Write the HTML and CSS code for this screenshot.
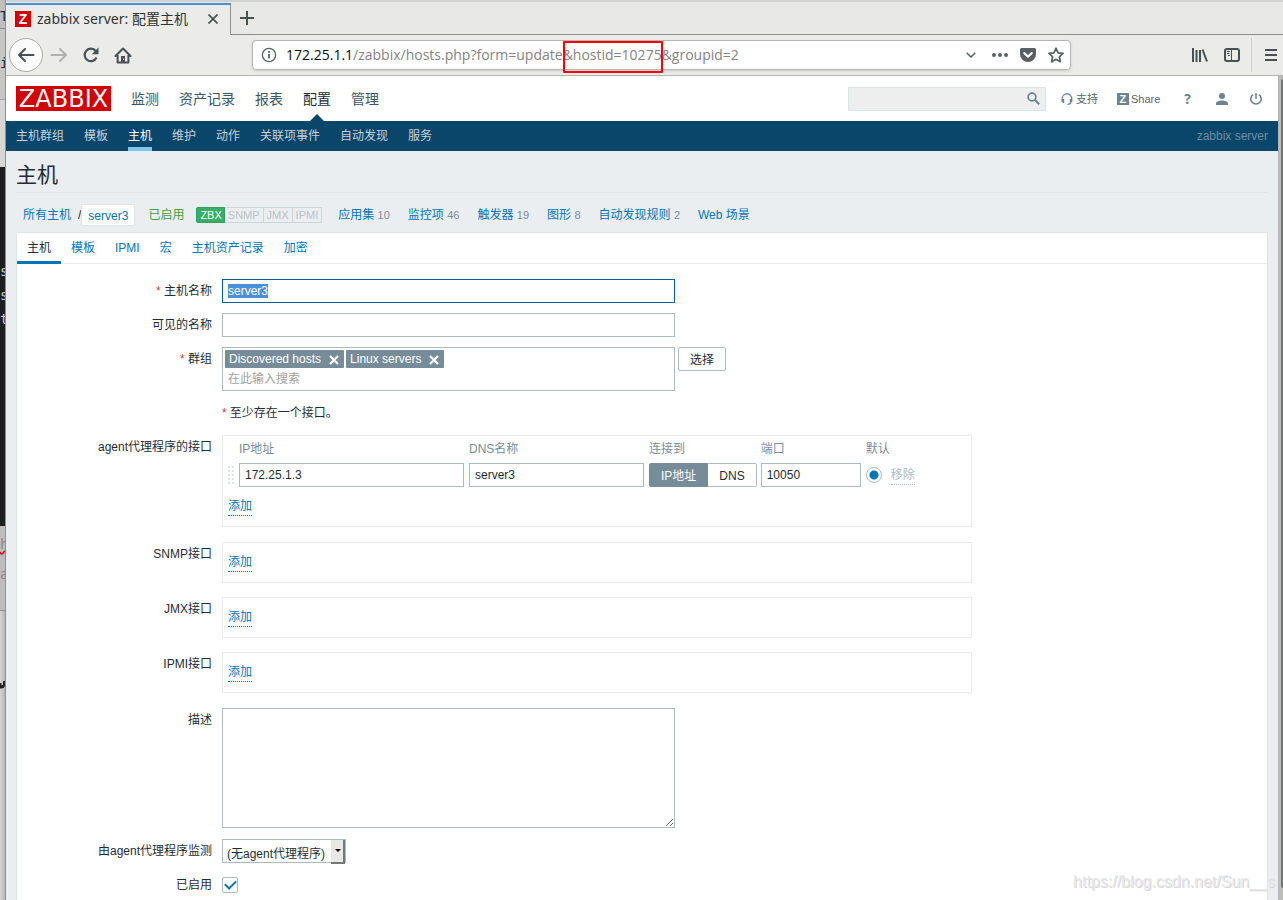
FILE: index.html
```html
<!DOCTYPE html>
<html lang="zh-CN">
<head>
<meta charset="utf-8">
<title>zabbix server: 配置主机</title>
<link rel="stylesheet" href="styles.css">
</head>
<body>
<div class="desktop">
  <div class="backdrop" aria-hidden="true">
    <div class="bd bd-top">T</div>
    <div class="bd bd-bar">i</div>
    <div class="bd bd-light">刂</div>
    <div class="bd bd-term">s<br>s<br>t</div>
    <div class="bd bd-mid"><u>h</u><br>a</div>
    <div class="bd bd-low"><svg width="5" height="8" viewBox="0 0 5 8"><path d="M0 2h1.500v2H3V0h2v4.500Q4.500 8 0 7.500z" fill="#222"/></svg></div>
  </div>
  <div class="window">
    <div class="tabstrip">
      <div class="btab">
        <span class="favicon">Z</span>
        <span class="btab-title">zabbix server: 配置主机</span>
        <button class="plain" aria-label="关闭标签页"><svg width="10" height="10" viewBox="0 0 10 10"><path d="M0.500 0.500l9 9M9.500 0.500l-9 9" stroke="#4c5052" stroke-width="1.700"/></svg></button>
      </div>
      <button class="plain newtab" aria-label="新标签页"><svg width="14" height="14" viewBox="0 0 14 14"><path d="M7 0v14M0 7h14" stroke="#4a4f51" stroke-width="2"/></svg></button>
    </div>
    <div class="toolbar">
      <button class="back" aria-label="后退"><svg width="18" height="16" viewBox="0 0 18 16"><path d="M16.500 8H2M8 2L2 8l6 6" fill="none" stroke="#4a4f51" stroke-width="2" stroke-linecap="round" stroke-linejoin="round"/></svg></button>
      <button class="plain" aria-label="前进"><svg width="18" height="16" viewBox="0 0 18 16"><path d="M1.500 8H16M10 2l6 6-6 6" fill="none" stroke="#b0b1b0" stroke-width="2" stroke-linecap="round" stroke-linejoin="round"/></svg></button>
      <button class="plain" aria-label="刷新"><svg width="16" height="16" viewBox="0 0 16 16"><path d="M13.500 10.500A6.200 6.200 0 1 1 12.700 4" fill="none" stroke="#4a4f51" stroke-width="2.200"/><path d="M15.500 0.500v6.700H8.800z" fill="#4a4f51"/></svg></button>
      <button class="plain" aria-label="主页"><svg width="18" height="17" viewBox="0 0 18 17"><path d="M1.500 9L9 1.500 16.500 9M3.600 8v7.600h10.800V8" fill="none" stroke="#4a4f51" stroke-width="2" stroke-linejoin="round" stroke-linecap="round"/><path d="M7 9h4v6H7z" fill="#4a4f51"/><path d="M9.500 11.500v1.500" stroke="#ebebea"/></svg></button>
      <div class="urlbar">
        <svg width="16" height="16" viewBox="0 0 16 16"><circle cx="8" cy="8" r="6.600" fill="none" stroke="#5c6062" stroke-width="1.300"/><path d="M8 7v4.500M8 4v1.800" stroke="#5c6062" stroke-width="1.800"/></svg>
        <span class="url"><b>172.25.1.1</b>/zabbix/hosts.php?form=update<span class="mark">&amp;hostid=10275</span>&amp;groupid=2</span>
        <span class="urlicons">
          <svg width="10" height="6" viewBox="0 0 10 6"><path d="M0.700 0.700L5 5l4.300-4.300" fill="none" stroke="#5c6062" stroke-width="1.500"/></svg>
          <svg width="16" height="4" viewBox="0 0 16 4"><circle cx="2" cy="2" r="2" fill="#5c6062"/><circle cx="8" cy="2" r="2" fill="#5c6062"/><circle cx="14" cy="2" r="2" fill="#5c6062"/></svg>
          <svg width="16" height="14" viewBox="0 0 16 14"><path d="M1.500 0h13A1.500 1.500 0 0 1 16 1.500V6A8 8 0 0 1 0 6V1.500A1.500 1.500 0 0 1 1.500 0z" fill="#5c5f61"/><path d="M4.200 5L8 8.700 11.800 5" fill="none" stroke="#fff" stroke-width="2" stroke-linecap="round" stroke-linejoin="round"/></svg>
          <svg width="16" height="16" viewBox="0 0 16 16"><path d="M8 1.300l2.100 4.500 4.900.6-3.600 3.400.9 4.900L8 12.300l-4.300 2.400.9-4.900L1 6.400l4.900-.6z" fill="none" stroke="#5c6062" stroke-width="1.800" stroke-linejoin="round"/></svg>
        </span>
      </div>
      <div class="tbright">
        <svg width="16" height="14" viewBox="0 0 16 14"><path d="M1 0v14M4.500 2v12M8 2v12M10.500 1.500l4.500 12" fill="none" stroke="#4a4f51" stroke-width="2"/></svg>
        <svg width="16" height="14" viewBox="0 0 16 14"><rect x="1" y="1" width="14" height="12" rx="2" fill="none" stroke="#4a4f51" stroke-width="2"/><path d="M7.500 1v12M3 3.500h3M3 5.500h2.500M4 7.500h2" stroke="#4a4f51"/></svg>
        <span class="tbsep"></span>
        <svg width="12" height="12" viewBox="0 0 12 12"><path d="M0 1h12M0 6h12M0 11h12" stroke="#4a4f51" stroke-width="2"/></svg>
      </div>
    </div>
    <div class="viewport">
      <div class="page">
        <header class="header">
          <a class="logo" href="#">ZABBIX</a>
          <nav class="mainnav">
            <a href="#">监测</a><a href="#">资产记录</a><a href="#">报表</a><a href="#" class="on">配置</a><a href="#">管理</a>
          </nav>
          <div class="search"><input type="text" aria-label="搜索"><svg width="13" height="13" viewBox="0 0 13 13"><circle cx="5" cy="5" r="3.900" fill="none" stroke="#6e8291" stroke-width="1.700"/><path d="M7.800 7.800l4.400 4.400" stroke="#6e8291" stroke-width="2"/></svg></div>
          <a class="tool t1" href="#"><svg width="12" height="12" viewBox="0 0 12 12"><path d="M1.200 9V5.500a4.600 4.600 0 0 1 9.500 0V9M9.800 9.500c0 1.300-1 1.800-3.300 1.800" fill="none" stroke="#6e8291" stroke-width="1.300"/><path d="M0.600 6h2.600v4H2zM11.400 6H8.800v4H10z" fill="#6e8291"/></svg>支持</a>
          <a class="tool t2" href="#"><span class="zicon">Z</span>Share</a>
          <a class="tool help" href="#">?</a>
          <a class="tool t3" href="#" aria-label="用户"><svg width="12" height="12" viewBox="0 0 12 12"><circle cx="6" cy="3" r="3" fill="#6e8291"/><path d="M0 12V10.500C0 8.500 3 7.500 6 7.500s6 1 6 3V12z" fill="#6e8291"/></svg></a>
          <a class="tool" href="#" aria-label="退出"><svg width="12" height="12" viewBox="0 0 12 12"><path d="M3 1.600a5.200 5.200 0 1 0 6 0M6 0v6" fill="none" stroke="#6e8291" stroke-width="1.600"/></svg></a>
        </header>
        <nav class="subnav">
          <a href="#">主机群组</a><a href="#">模板</a><a href="#" class="on">主机</a><a href="#">维护</a><a href="#">动作</a><a href="#">关联项事件</a><a href="#">自动发现</a><a href="#">服务</a>
          <span class="server">zabbix server</span>
        </nav>
        <main class="main">
          <h1>主机</h1>
          <div class="crumbs">
            <a href="#">所有主机</a><span class="slash">/</span><a class="current" href="#">server3</a>
            <span class="enabled">已启用</span>
            <span class="status"><span class="up">ZBX</span><span>SNMP</span><span>JMX</span><span>IPMI</span></span>
            <span class="links">
              <span><a href="#">应用集</a> <small>10</small></span>
              <span><a href="#">监控项</a> <small>46</small></span>
              <span><a href="#">触发器</a> <small>19</small></span>
              <span><a href="#">图形</a> <small>8</small></span>
              <span><a href="#">自动发现规则</a> <small>2</small></span>
              <span><a href="#">Web 场景</a></span>
            </span>
          </div>
          <form class="panel">
            <nav class="tabs">
              <a href="#" class="on">主机</a><a href="#">模板</a><a href="#">IPMI</a><a href="#">宏</a><a href="#">主机资产记录</a><a href="#">加密</a>
            </nav>
            <div class="fields">
              <label class="lab" for="host"><i>*</i> 主机名称</label>
              <div><input id="host" class="wide" type="text" value="server3"></div>

              <label class="lab" for="visible">可见的名称</label>
              <div><input id="visible" class="wide" type="text"></div>

              <label class="lab" for="groups"><i>*</i> 群组</label>
              <div class="grouprow">
                <div class="multi">
                  <div class="chips">
                    <span class="chip">Discovered hosts<button type="button" aria-label="移除 Discovered hosts"><svg width="10" height="10" viewBox="0 0 10 10"><path d="M1 1l8 8M9 1L1 9" stroke="#fff" stroke-width="2.200"/></svg></button></span>
                    <span class="chip">Linux servers<button type="button" aria-label="移除 Linux servers"><svg width="10" height="10" viewBox="0 0 10 10"><path d="M1 1l8 8M9 1L1 9" stroke="#fff" stroke-width="2.200"/></svg></button></span>
                  </div>
                  <input id="groups" type="text" placeholder="在此输入搜索">
                </div>
                <button type="button" class="btn">选择</button>
              </div>

              <span></span>
              <div class="note"><i>*</i> 至少存在一个接口。</div>

              <span class="lab">agent代理程序的接口</span>
              <div class="box agent">
                <table>
                  <thead><tr><th></th><th>IP地址</th><th>DNS名称</th><th>连接到</th><th>端口</th><th>默认</th><th></th></tr></thead>
                  <tbody><tr>
                    <td class="drag"><svg width="6" height="18" viewBox="0 0 6 18"><path d="M1 0v18M5 0v18" stroke="#dfe4e7" stroke-width="2" stroke-dasharray="2 2"/></svg></td>
                    <td><input class="ip" type="text" value="172.25.1.3" aria-label="IP地址"></td>
                    <td><input class="dns" type="text" value="server3" aria-label="DNS名称"></td>
                    <td><span class="seg"><button type="button" class="on">IP地址</button><button type="button">DNS</button></span></td>
                    <td><input class="port" type="text" value="10050" aria-label="端口"></td>
                    <td><input type="radio" class="radio" checked aria-label="默认"></td>
                    <td><a class="dotted off" href="#">移除</a></td>
                  </tr></tbody>
                </table>
                <a class="dotted" href="#">添加</a>
              </div>

              <span class="lab">SNMP接口</span>
              <div class="box"><a class="dotted" href="#">添加</a></div>

              <span class="lab">JMX接口</span>
              <div class="box"><a class="dotted" href="#">添加</a></div>

              <span class="lab">IPMI接口</span>
              <div class="box"><a class="dotted" href="#">添加</a></div>

              <label class="lab desclab" for="desc">描述</label>
              <div class="descrow"><textarea id="desc" class="wide"></textarea></div>

              <label class="lab" for="proxy">由agent代理程序监测</label>
              <div><span class="selwrap"><select id="proxy"><option>(无agent代理程序)</option></select></span></div>

              <label class="lab" for="on">已启用</label>
              <div class="checkrow"><input id="on" type="checkbox" class="check" checked></div>
            </div>
          </form>
        </main>
      </div>
      <div class="scroll"><div class="thumb"></div></div>
    </div>
  </div>
  <div class="watermark">https://blog.csdn.net/Sun__s</div>
</div>
<script src="script.js"></script>
</body>
</html>
```

FILE: styles.css
```css
* { box-sizing: border-box; }
body {
  margin: 0;
  font: 12px/16px "Liberation Sans", "Noto Sans CJK SC", sans-serif;
  color: #1f2c33;
}
a { color: #0275b8; text-decoration: none; }
svg { display: block; flex: none; }
button, input, textarea, select { font: inherit; color: inherit; margin: 0; }
i { color: #e33734; font-style: normal; }
.plain { border: 0; padding: 0; background: none; }

.desktop { display: flex; height: 100vh; overflow: hidden; position: relative; }

/* slice of the windows behind the browser */
.backdrop { flex: none; width: 6px; display: flex; flex-direction: column; border-right: 1px solid #8e8e8e; background: #c9c9c9; }
.bd { overflow: hidden; font: 14px/24px "DejaVu Sans Mono", "Noto Sans CJK SC", monospace; }
.bd-top { height: 29px; padding-top: 4px; background: #bfc0be; border-bottom: 1px solid #8b8b8a; }
.bd-bar { height: 71px; padding-top: 22px; background: #c6c6c5; border-bottom: 1px solid #a5a5a5; }
.bd-light { height: 67px; padding-top: 36px; background: #d6d6d6; }
.bd-term { height: 359px; padding-top: 92px; background: #1c1f20; color: #ccc; }
.bd-mid { height: 85px; padding-top: 3px; background: #bdbdbd; border-bottom: 1px solid #8b8b8a; color: #8a8a8a; line-height: 30px; }
.bd-mid u { text-decoration: underline wavy #d00; }
.bd-low { flex: 1; padding-top: 70px; background: linear-gradient(90deg, #d4d4d4, #b8b8b8); }

.window { flex: 1; min-width: 0; display: flex; flex-direction: column; background: #ebebea; }

.tabstrip { flex: none; display: flex; height: 35px; padding-top: 3px; background: #e8e8e6; border-bottom: 1px solid #8e908e; box-shadow: inset 0 2px #d2d3d1; }
.btab { display: flex; align-items: center; width: 225px; margin-bottom: -1px; padding: 0 12px 2px 9px; background: #ebebea; border-top: 2px solid #4a90d9; border-right: 1px solid #8e908e; }
.favicon { width: 16px; height: 16px; background: #d40000; color: #fff; font: bold 14px/16px "Liberation Sans", sans-serif; text-align: center; }
.btab-title { flex: 1; margin-left: 6px; font: 14px/20px "Noto Sans", "Noto Sans CJK SC", sans-serif; color: #2e3436; white-space: nowrap; }
.newtab { margin-left: 9px; padding-bottom: 1px; }

.toolbar { flex: none; display: flex; align-items: center; gap: 15px; height: 41px; padding: 0 6px 0 3px; border-bottom: 1px solid #b4b4b3; }
.back { display: grid; place-items: center; width: 34px; height: 34px; padding: 0; margin-right: -8px; border: 1px solid #a9aaa8; border-radius: 50%; background: #fbfbfb; }
.urlbar { flex: 1; max-width: 819px; margin-left: 105px; display: flex; align-items: center; height: 30px; padding: 0 6px 0 8px; background: #fff; border: 1px solid #b5b5b4; border-radius: 4px; box-shadow: 0 1px 3px #0002; }
.url { flex: 1; margin-left: 9px; font: 14px/20px "Open Sans", "Noto Sans", sans-serif; color: #838383; white-space: nowrap; }
.url b { font-weight: 400; color: #0c0c0d; }
.mark { position: relative; }
.mark::after { content: ""; position: absolute; inset: -4px -1px -9px 0; border: 2px solid #f00; border-radius: 1px; }
.urlicons { display: flex; align-items: center; gap: 12px; }
.urlicons svg:first-child { margin-right: 4px; }
.tbright { margin-left: auto; display: flex; align-items: center; gap: 16px; }
.tbsep { width: 1px; height: 34px; margin: 0 -3px 0 -5px; background: #cfcfce; }

.viewport { flex: 1; min-height: 0; display: flex; }
.scroll { flex: none; width: 5px; padding: 3px 0 12px 2px; background: #bdbdbc; border-left: 1px solid #b4b4b3; }
.thumb { height: 100%; background: #747675; border-radius: 3px 0 0 3px; }
.page { flex: 1; min-width: 0; display: flex; flex-direction: column; background: #ebeef0; overflow: hidden; }

.header { flex: none; display: flex; align-items: center; height: 45px; padding: 0 16px 0 10px; background: #fff; }
.logo { width: 95px; height: 25px; background: #d40000; color: #fff; font: 24px/26px "DejaVu Sans", sans-serif; text-align: center; }
.mainnav { flex: 1; display: flex; gap: 20px; margin-left: 20px; font-size: 14px; line-height: 46px; }
.mainnav a { color: #3c5563; position: relative; }
.mainnav .on { color: #1f2c33; }
.mainnav .on::after { content: ""; position: absolute; left: 6px; bottom: 0; border: 8px solid transparent; border-top: 0; border-bottom-color: #0a466a; }
.search { display: flex; align-items: center; width: 198px; height: 24px; padding-right: 5px; background: #eee; border: 1px solid #dfe4e7; }
.search input { flex: 1; min-width: 0; }
.tool { display: flex; align-items: center; gap: 3px; font-size: 11px; color: #546672; }
.t1 { margin-left: 15px; }
.t2 { margin-left: 19px; gap: 2px; }
.zicon { width: 12px; height: 12px; background: #6e8291; color: #fff; font: bold 11px/12px "Liberation Sans", sans-serif; text-align: center; }
.help { margin-left: 24px; color: #6e8291; font: bold 14px/16px "Noto Sans", sans-serif; }
.t3 { margin: 0 22px 0 25px; }

.subnav { flex: none; display: flex; gap: 20px; height: 30px; padding: 0 10px; background: #0a466a; line-height: 30px; }
.subnav a { color: #c3d3dd; }
.subnav .on { color: #fff; border-bottom: 4px solid #7fc6f3; }
.server { margin-left: auto; color: #6d8da1; }

.main { flex: 1; min-height: 0; display: flex; flex-direction: column; padding: 0 10px; }
h1 { margin: 0; padding: 9px 0 2px; font-size: 21px; line-height: 30px; font-weight: 400; border-bottom: 1px solid #dfe4e7; }
.crumbs { display: flex; align-items: center; height: 39px; padding: 5px 0 0 7px; white-space: nowrap; }
.slash { margin: 0 0 0 7px; }
.current { padding: 2px 6px 0; line-height: 18px; background: #fff; border: 1px solid #dfe4e7; border-radius: 2px; }
.enabled { margin-left: 13px; color: #429e47; }
.status { display: flex; margin-left: 12px; font-size: 11px; line-height: 14px; }
.status span { padding: 0 3px; border: 1px solid #ccd5d9; border-left-width: 0; color: #b9c3c8; }
.status .up { padding: 0 2px 0 3px; background: #34af67; border-color: #2f9f5e; color: #fff; border-left-width: 1px; border-radius: 2px 0 0 2px; }
.links { display: flex; gap: 18px; margin-left: 16px; }
.links small { font-size: 11px; color: #768d99; }

.panel { flex: 1; margin: 0; background: #fff; border: 1px solid #dfe4e7; border-bottom: 0; }
.tabs { display: flex; height: 31px; border-bottom: 1px solid #ebebeb; line-height: 30px; }
.tabs a { height: 31px; padding: 0 10px; }
.tabs .on { color: #1f2c33; border-bottom: 3px solid #0275b8; }

.fields { display: grid; grid-template-columns: 195px 1fr; column-gap: 10px; row-gap: 10px; padding-top: 15px; }
.lab { text-align: right; line-height: 24px; white-space: nowrap; }
.fields > div { display: flex; }
input[type=text], textarea { height: 24px; padding: 0 5px; border: 1px solid #acbbc2; border-radius: 0; background: #fff; outline: 0; }
.search input[type=text] { border: 0; background: none; }
.wide { width: 453px; }
#host { border-color: #00609c; }
#host::selection { background: #4a90d9; color: #fff; }
.grouprow { gap: 3px; align-items: flex-start; }
.multi { width: 453px; height: 44px; padding: 2px; border: 1px solid #acbbc2; }
.chips { display: flex; gap: 2px; }
.chip { display: flex; align-items: center; gap: 8px; height: 18px; padding: 0 5px 0 4px; background: #768d99; color: #fff; border-radius: 1px; }
.chip button { padding: 2px 0 0; border: 0; background: none; }
.multi input[type=text] { display: block; width: 100%; height: 22px; padding: 0 3px; border: 0; }
.multi input::placeholder { color: #a0a0a0; }
.btn { height: 24px; padding: 1px 11px 0; border: 1px solid #acbbc2; border-radius: 2px; background: #fff; }
.note { line-height: 24px; }
.note i { margin-right: 3px; }

.fields > .box { width: 750px; height: 41px; margin-bottom: 4px; padding: 11px 5px; border: 1px solid #ebebeb; align-items: flex-start; }
.fields > .agent { display: block; height: 92px; margin-bottom: 5px; padding: 4px 5px; }
table { border-collapse: collapse; }
th { padding: 0 0 5px; font-weight: 400; text-align: left; line-height: 18px; color: #768d99; }
td { padding: 0 5px 0 0; vertical-align: middle; line-height: 24px; }
td input, .seg { display: block; }
.ip { width: 225px; }
.dns { width: 175px; }
.port { width: 100px; }
.seg { display: flex; margin-right: -1px; }
.seg button { height: 24px; padding: 0 11px; border: 1px solid #acbbc2; border-left: 0; border-radius: 0 2px 2px 0; background: #fff; }
.seg .on { border: 1px solid #768d99; border-radius: 2px 0 0 2px; background: #768d99; color: #fff; }
.dotted { display: inline-block; line-height: 17px; border-bottom: 1px dotted #0275b8; }
.agent > .dotted { margin-top: 11px; }
.off { color: #acbbc2; border-color: #acbbc2; }
.radio { appearance: none; width: 16px; height: 16px; margin-right: 4px; border: 1px solid #acbbc2; border-radius: 50%; background: radial-gradient(circle, #0275b8 4px, #fff 5px); }

textarea { display: block; resize: vertical; }
.descrow, .desclab { margin: 1px 0; }
.descrow textarea { height: 120px; }
.selwrap { position: relative; }
.selwrap select { display: block; appearance: none; width: 124px; height: 24px; padding: 5px 12px 0 4px; border: 1px solid #acbbc2; border-radius: 0; background: #fff; line-height: 18px; }
.selwrap::before { content: ""; position: absolute; right: 1px; top: 1px; width: 12px; height: 22px; background: #e8e8e6; border: solid #777; border-width: 0 2px 2px 0; pointer-events: none; }
.selwrap::after { content: ""; position: absolute; right: 5px; top: 10px; border: 3px solid transparent; border-top-color: #000; border-bottom: 0; pointer-events: none; }
.checkrow { align-items: center; height: 24px; }
.check { appearance: none; display: grid; place-items: center; width: 16px; height: 16px; border: 1px solid #acbbc2; border-radius: 2px; }
.check::after { content: ""; width: 9px; height: 5px; margin-bottom: 3px; border: solid #0275b8; border-width: 0 0 2px 2px; transform: rotate(-45deg); }

.watermark { position: absolute; right: 8px; bottom: 8px; font-size: 16px; line-height: 20px; color: #e9e9e9; text-shadow: 1px 1px #d6d6d6; pointer-events: none; }
```

FILE: script.js
```js
const host = document.getElementById('host');
host.focus();
host.select();
```
